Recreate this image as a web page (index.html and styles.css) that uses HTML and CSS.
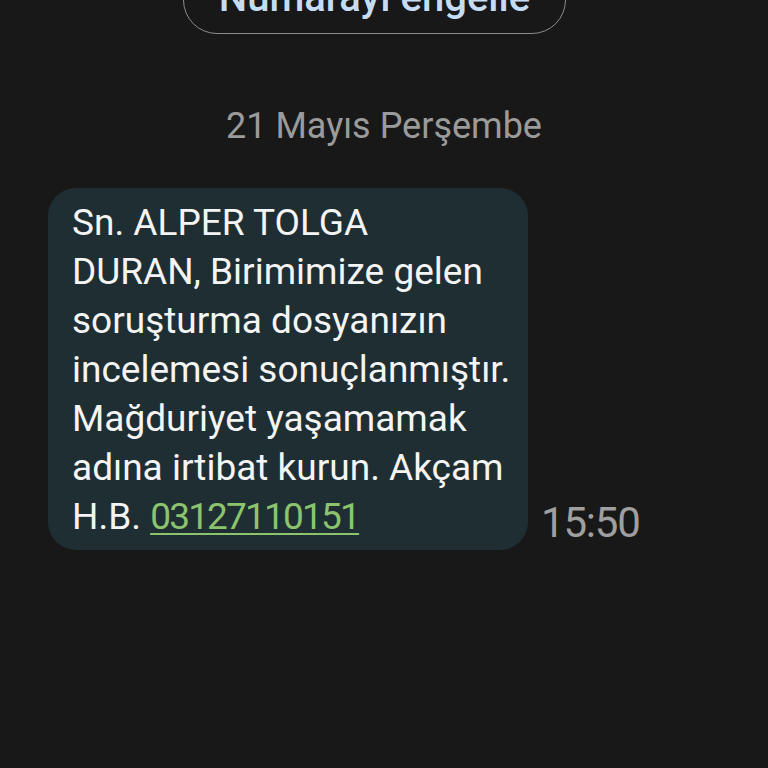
FILE: index.html
```html
<!DOCTYPE html>
<html lang="tr">
<head>
    <meta charset="UTF-8">
    <meta name="viewport" content="width=device-width, initial-scale=1.0">
    <title>Mesajlar</title>
    <link rel="stylesheet" href="styles.css">
</head>
<body>
    <main class="thread">
        <div class="block-row">
            <button class="block-button">Numarayı engelle</button>
        </div>
        <div class="date-divider">21 Mayıs Perşembe</div>
        <div class="message-row">
            <div class="bubble">
                Sn. ALPER TOLGA<br>
                DURAN, Birimimize gelen<br>
                soruşturma dosyanızın<br>
                incelemesi sonuçlanmıştır.<br>
                Mağduriyet yaşamamak<br>
                adına irtibat kurun. Akçam<br>
                H.B. <a href="#" class="phone-link">03127110151</a>
            </div>
            <span class="timestamp">15:50</span>
        </div>
    </main>
</body>
</html>
```

FILE: styles.css
```css
/* General */
body {
    margin: 0;
    padding: 0;
    background-color: #181818;
    font-family: Roboto, "Noto Sans", sans-serif;
    color: #ffffff;
    height: 768px;
    overflow: hidden;
}

.thread {
    display: flex;
    flex-direction: column;
}

/* Block number button (scrolled partly off screen) */
.block-row {
    display: flex;
    justify-content: center;
    margin-top: -34px;
    padding-right: 19px;
}

.block-button {
    width: 383px;
    height: 68px;
    border: 1.5px solid #8c8c8c;
    border-radius: 34px;
    background: transparent;
    color: #c5dcf5;
    font-family: Roboto, sans-serif;
    font-size: 40px;
    font-weight: 500;
    padding: 0;
    padding-bottom: 6px;
}

/* Date */
.date-divider {
    text-align: center;
    color: #9b9b9b;
    font-size: 36px;
    margin-top: 69px;
    line-height: 46px;
}

/* Message */
.message-row {
    display: flex;
    align-items: flex-end;
    margin-top: 39px;
    padding-left: 48px;
}

.bubble {
    width: 432px;
    background-color: #1f2e32;
    border-radius: 28px;
    padding: 10px 24px 9px 24px;
    font-size: 37px;
    line-height: 49px;
    color: #f4f4f4;
    white-space: nowrap;
}

.phone-link {
    color: #8cc46e;
    letter-spacing: -1.8px;
    text-decoration: underline;
    text-decoration-thickness: 2px;
    text-underline-offset: 4px;
}

.timestamp {
    color: #9f9f9f;
    font-size: 42px;
    margin-left: 13px;
    margin-bottom: 3px;
    letter-spacing: -1.2px;
}
```
